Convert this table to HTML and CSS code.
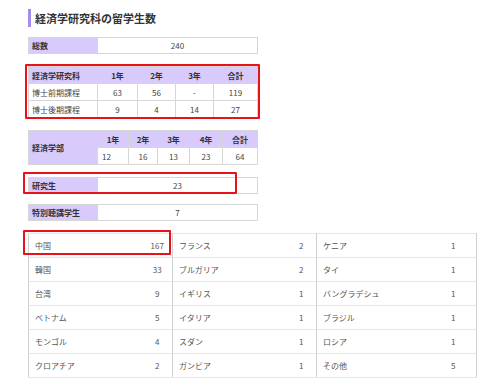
FILE: index.html
```html
<!DOCTYPE html>
<html lang="ja">
<head>
<meta charset="utf-8">
<link rel="stylesheet" href="styles.css">
</head>
<body>
<div class="page">
  <h2 class="title">経済学研究科の留学生数</h2>

  <table class="tbl small">
    <tr><th class="lab">総数</th><td class="val">240</td></tr>
  </table>

  <div class="mark-wrap">
    <table class="tbl grad">
      <colgroup><col class="g-lab"><col class="g1"><col class="g2"><col class="g3"><col></colgroup>
      <tr class="head"><th class="lab">経済学研究科</th><th>1年</th><th>2年</th><th>3年</th><th>合計</th></tr>
      <tr><td class="name">博士前期課程</td><td>63</td><td>56</td><td>-</td><td>119</td></tr>
      <tr><td class="name">博士後期課程</td><td>9</td><td>4</td><td>14</td><td>27</td></tr>
    </table>
    <div class="mark mark-grad"></div>
  </div>

  <table class="tbl under">
    <colgroup><col class="g-lab"><col class="u1"><col class="u2"><col class="u3"><col class="u4"><col></colgroup>
    <tr class="head"><th class="lab" rowspan="2">経済学部</th><th>1年</th><th>2年</th><th>3年</th><th>4年</th><th>合計</th></tr>
    <tr><td class="first">12</td><td>16</td><td>13</td><td>23</td><td>64</td></tr>
  </table>

  <div class="mark-wrap">
    <table class="tbl small">
      <tr><th class="lab">研究生</th><td class="val">23</td></tr>
    </table>
    <div class="mark mark-res"></div>
  </div>

  <table class="tbl small">
    <tr><th class="lab">特別聴講学生</th><td class="val">7</td></tr>
  </table>

  <div class="mark-wrap">
    <table class="countries">
      <colgroup>
        <col class="c-name"><col class="c-num"><col class="c-name"><col class="c-num"><col class="c-name"><col class="c-num3">
      </colgroup>
      <tr><td>中国</td><td class="n">167</td><td>フランス</td><td class="n">2</td><td>ケニア</td><td class="n">1</td></tr>
      <tr><td>韓国</td><td class="n">33</td><td>ブルガリア</td><td class="n">2</td><td>タイ</td><td class="n">1</td></tr>
      <tr><td>台湾</td><td class="n">9</td><td>イギリス</td><td class="n">1</td><td>バングラデシュ</td><td class="n">1</td></tr>
      <tr><td>ベトナム</td><td class="n">5</td><td>イタリア</td><td class="n">1</td><td>ブラジル</td><td class="n">1</td></tr>
      <tr><td>モンゴル</td><td class="n">4</td><td>スダン</td><td class="n">1</td><td>ロシア</td><td class="n">1</td></tr>
      <tr><td>クロアチア</td><td class="n">2</td><td>ガンビア</td><td class="n">1</td><td>その他</td><td class="n">5</td></tr>
    </table>
    <div class="mark mark-cn"></div>
  </div>
</div>
</body>
</html>
```
FILE: styles.css
```css
* { box-sizing: border-box; }
html, body { margin: 0; padding: 0; background: #fff; }
body {
  font-family: "Noto Sans CJK JP", "Noto Sans", sans-serif;
  color: #444;
  font-size: 8px;
}
.page {
  padding: 9px 0 0 28px;
  display: flex;
  flex-direction: column;
  align-items: flex-start;
}
.title {
  margin: 0;
  border-left: 3px solid #a68cf0;
  padding-left: 4px;
  font-size: 11px;
  line-height: 18px;
  height: 18px;
  font-weight: bold;
  color: #333;
}
.tbl {
  border-collapse: collapse;
  width: 230px;
  table-layout: fixed;
}
.tbl th, .tbl td {
  border: 1px solid #d6d6d6;
  padding: 0;
  text-align: center;
  line-height: 15px;
  font-size: 8px;
}
.tbl th { background: #d8cafb; font-weight: bold; color: #333; }
.tbl th.lab { text-align: left; padding-left: 3px; width: 69px; }
.tbl td.name { text-align: left; padding-left: 3px; }
.tbl td.first { text-align: left; padding-left: 4px; }
.g-lab { width: 69px; }
.g1 { width: 40px; }
.g2 { width: 38px; }
.g3 { width: 38px; }
.u1 { width: 31px; }
.u2 { width: 29px; }
.u3 { width: 32px; }
.u4 { width: 33px; }
.small { margin-top: 10px; }
.small th, .small td { height: 16px; }
.small td.val { background: #fff; }
.grad th, .grad td { height: 17px; }
.under th, .under td { height: 17px; }
.under { margin-top: 12px; }

.mark-wrap { position: relative; margin-top: 12px; }
.mark-wrap .small { margin-top: 0; }
.mark {
  position: absolute;
  border: 2px solid #e8131a;
  border-radius: 1px;
  pointer-events: none;
}
.mark-grad { left: -3px; top: -2px; width: 235px; height: 55px; }
.mark-res { left: -5px; top: -5px; width: 214px; height: 22px; }
.mark-cn { left: -5px; top: -3px; width: 148px; height: 25px; }

.countries {
  border-collapse: collapse;
  table-layout: fixed;
  width: 448px;
  border: 1px solid #cfcfcf;
}
.c-name { width: 114px; }
.c-num { width: 30px; }
.c-num3 { width: 46px; }
.countries td {
  height: 24px;
  padding: 0 0 0 6px;
  border-top: 1px solid #e6e6e6;
  border-bottom: 1px solid #e6e6e6;
  font-size: 8px;
  line-height: 12px;
  color: #555;
  text-align: left;
}
.countries td.n {
  text-align: center;
  padding: 0;
  border-right: 1px solid #cfcfcf;
}
```
